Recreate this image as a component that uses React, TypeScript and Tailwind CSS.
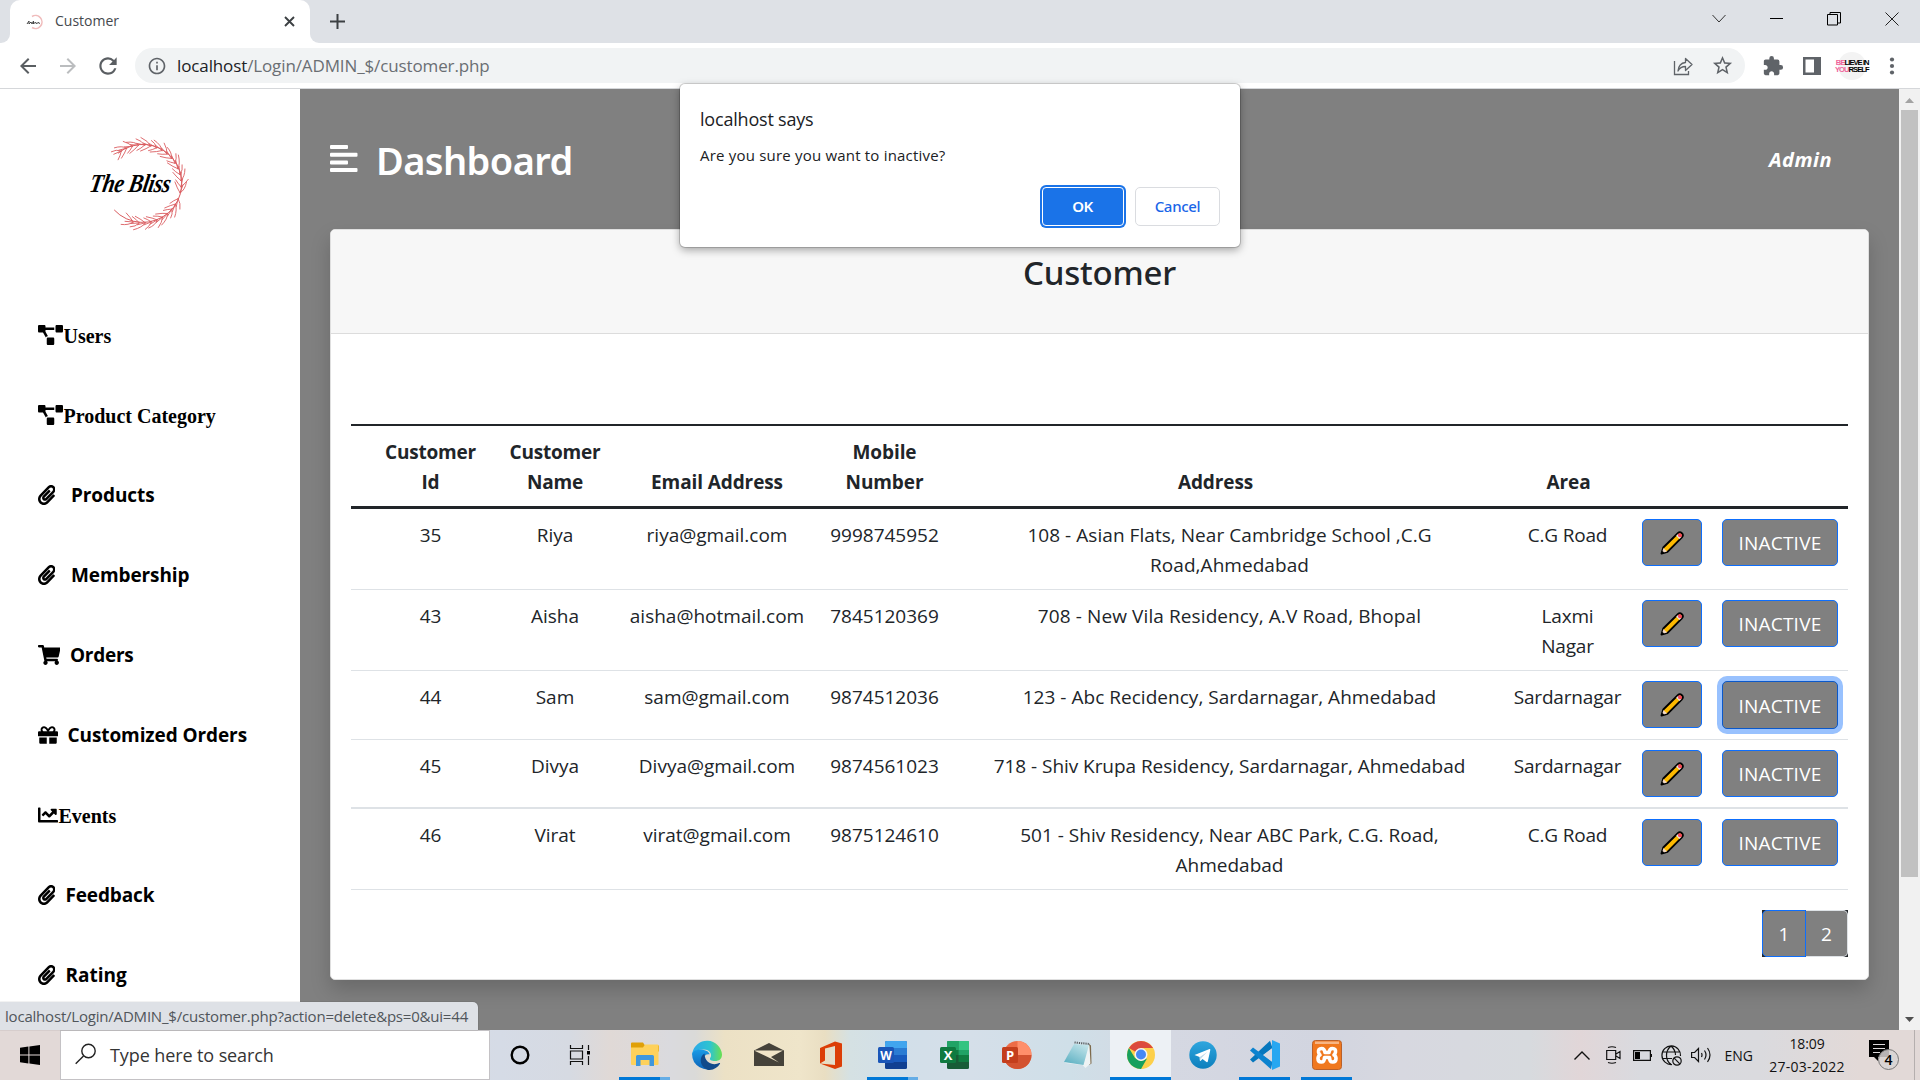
import React from 'react';
import { FaPaperclip, FaShoppingCart, FaGift, FaChartLine, FaProjectDiagram } from 'react-icons/fa';
import { MdArrowBack, MdArrowForward, MdRefresh, MdInfoOutline, MdStarBorder, MdExtension } from 'react-icons/md';

const polar = (cx: number, cy: number, r: number, a: number) => [cx + r * Math.cos(a), cy + r * Math.sin(a)];

function Wreath() {
  const start = (-122 * Math.PI) / 180;
  const end = (112 * Math.PI) / 180;
  const count = 26;
  const leaves = Array.from({ length: count }, (_, i) => {
    const a = start + ((end - start) * i) / count;
    const dir = a < 0.35 ? -1 : 1;
    const j = [0, 0.05, -0.03, 0.07][i % 4];
    const base = polar(52, 54, 39, a);
    const outer = polar(52, 54, 44.5 + (i % 3), a + (0.2 + j) * dir);
    const outerMid = polar(52, 54, 43.5, a + 0.08 * dir);
    const inner = polar(52, 54, 34 - (i % 2), a + (0.22 + j) * dir);
    const innerMid = polar(52, 54, 35.5, a + 0.1 * dir);
    const mid = polar(52, 54, 41, a + 0.2 * dir);
    return `M${base}Q${outerMid} ${outer}M${base}Q${innerMid} ${inner}M${base}L${mid}`;
  }).join('');
  return (
    <svg width="110" height="105" viewBox="0 0 110 105" className="absolute inset-0">
      <path d={`M${polar(52, 54, 39, (-128 * Math.PI) / 180)}A39 39 0 1 1 ${polar(52, 54, 38, (137 * Math.PI) / 180)}`} fill="none" stroke="#d4494d" strokeWidth="0.9" />
      <path d={leaves} fill="none" stroke="#da5c60" strokeWidth="0.9" strokeLinecap="round" />
    </svg>
  );
}

function Logo() {
  return (
    <div className="relative h-[105px] w-[110px]">
      <Wreath />
      <div className="absolute left-0 top-[38px] origin-left -skew-x-12 scale-x-[0.84] whitespace-nowrap font-['Liberation_Serif',serif] text-[26px] font-bold italic leading-[32px] tracking-[-0.5px] text-black">
        The Bliss
      </div>
    </div>
  );
}

function TabStrip() {
  return (
    <div className="flex h-[43px] shrink-0 bg-[#dee1e6]">
      <div className="flex w-[10px] items-end bg-white">
        <div className="h-full w-[10px] rounded-br-[9px] bg-[#dee1e6]" />
      </div>
      <div className="bg-[#dee1e6]">
        <div className="flex h-[43px] w-[300px] items-center rounded-t-[10px] bg-white pl-[16px] pr-[15px]">
          <svg width="18" height="16" viewBox="0 0 18 16">
            <path d="M6 2.500A6.500 6.500 0 1 1 6 13.500" fill="none" stroke="#f0bcbc" strokeWidth="1.600" />
            <path d="M1 10l2-3v3l2-2 1 2 1.500-3v3l2-2 1 2 2-2 1 2" fill="none" stroke="#444" strokeWidth="1" />
          </svg>
          <span className="ml-[11px] mt-[-2px] flex-1 font-['Open_Sans',sans-serif] text-[14px] text-[#45494d]">Customer</span>
          <svg width="11" height="11" viewBox="0 0 11 11" className="mt-[-1px]">
            <path d="M1 1l9 9M10 1l-9 9" stroke="#3c4043" strokeWidth="1.900" />
          </svg>
        </div>
      </div>
      <div className="w-[10px] bg-white">
        <div className="h-full w-[10px] rounded-bl-[9px] bg-[#dee1e6]" />
      </div>
      <svg width="15" height="15" viewBox="0 0 15 15" className="ml-[10px] mt-[14px]">
        <path d="M7.500 0v15M0 7.500h15" stroke="#3c4043" strokeWidth="2" />
      </svg>
      <div className="ml-auto flex gap-[44px] pr-[21px] pt-[12px]">
        <svg width="14" height="14" viewBox="0 0 14 14"><path d="M.5 3l6.500 7 6.500-7" fill="none" stroke="#333" strokeWidth="1" /></svg>
        <svg width="13" height="14" viewBox="0 0 13 14"><path d="M0 6.500h13" stroke="#000" /></svg>
        <svg width="14" height="14" viewBox="0 0 14 14"><path d="M.5 2.500h10v10.500H.5zM3 2.500V.5h10.500V11H10.500" fill="none" stroke="#000" /></svg>
        <svg width="14" height="14" viewBox="0 0 14 14"><path d="M.5.5l13 13M13.500.5l-13 13" stroke="#222" strokeWidth="1" /></svg>
      </div>
    </div>
  );
}

function Toolbar() {
  return (
    <div className="flex h-[46px] shrink-0 items-center border-b border-[#d5d7da] bg-white pl-[16px]">
      <MdArrowBack size={24} className="text-[#5a5e62]" />
      <MdArrowForward size={24} className="ml-[16px] text-[#bbbdbf]" />
      <MdRefresh size={26} className="ml-[15px] text-[#5a5e62]" />
      <div className="ml-[14px] flex h-[35px] w-[1610px] items-center rounded-full bg-[#f1f3f4] pl-[12px] pr-[11px]">
        <MdInfoOutline size={20} className="text-[#5f6368]" />
        <span className="ml-[10px] flex-1 font-['Open_Sans',sans-serif] text-[17px] tracking-[-0.12px] text-[#6a6e73]">
          <span className="text-[#202124]">localhost</span>/Login/ADMIN_$/customer.php
        </span>
        <svg width="21" height="20" viewBox="0 0 21 20">
          <path d="M1.500 5v13.500h14V15" fill="none" stroke="#5f6368" strokeWidth="1.300" />
          <path d="M5 15c.5-5.500 3-8 7.500-8.500V2.500l6.500 6-6.500 6v-4C9 10.500 6.500 12 5 15z" fill="none" stroke="#5f6368" strokeWidth="1.300" strokeLinejoin="round" />
        </svg>
        <MdStarBorder size={23} className="ml-[17px] text-[#5f6368]" />
      </div>
      <MdExtension size={22} className="ml-[17px] text-[#5f6368]" />
      <svg width="18" height="18" viewBox="0 0 18 18" className="ml-[19px]">
        <path fillRule="evenodd" d="M0 0h18v18H0zM2.500 2.500v13H11v-13z" fill="#5f6368" />
      </svg>
      <div className="ml-[17px] flex h-[28px] w-[28px] flex-col items-center justify-center rounded-full bg-[#f3f3f3] font-['Liberation_Sans',sans-serif] text-[8px] font-bold leading-[7px] tracking-[-1px] text-black">
        <span className="scale-x-[0.95] whitespace-nowrap"><span className="text-[#f0649a]">BE</span>LIEVE IN</span>
        <span className="scale-x-[0.95] whitespace-nowrap"><span className="text-[#f0649a]">YOU</span>RSELF</span>
      </div>
      <svg width="6" height="18" viewBox="0 0 6 18" className="ml-[23px]">
        <g fill="#5f6368"><circle cx="3" cy="2.500" r="2.100" /><circle cx="3" cy="9" r="2.100" /><circle cx="3" cy="15.500" r="2.100" /></g>
      </svg>
    </div>
  );
}

const nav = [
  { label: 'Users', icon: <FaProjectDiagram className="mt-[-1px] h-[20px] w-[25px] shrink-0" />, serif: true, gap: 'ml-[1px]' },
  { label: 'Product Category', icon: <FaProjectDiagram className="mt-[-1px] h-[20px] w-[25px] shrink-0" />, serif: true, gap: 'ml-[1px]' },
  { label: 'Products', icon: <FaPaperclip className="h-[20px] w-[17.500px] shrink-0" />, serif: false, gap: 'ml-[16px] tracking-[-0.1px]' },
  { label: 'Membership', icon: <FaPaperclip className="h-[20px] w-[17.500px] shrink-0" />, serif: false, gap: 'ml-[16px] tracking-[-0.1px]' },
  { label: 'Orders', icon: <FaShoppingCart className="h-[20px] w-[22.500px] shrink-0" />, serif: false, gap: 'ml-[10px] tracking-[-0.26px]' },
  { label: 'Customized Orders', icon: <FaGift className="h-[20px] w-[20px] shrink-0" />, serif: false, gap: 'ml-[10px] tracking-[-0.09px]' },
  { label: 'Events', icon: <FaChartLine className="mt-[-1px] h-[20px] w-[20px] shrink-0" />, serif: true, gap: 'ml-[1px]' },
  { label: 'Feedback', icon: <FaPaperclip className="h-[20px] w-[17.500px] shrink-0" />, serif: false, gap: 'ml-[10.500px] tracking-[-0.14px]' },
  { label: 'Rating', icon: <FaPaperclip className="h-[20px] w-[17.500px] shrink-0" />, serif: false, gap: 'ml-[10.500px]' },
];

function Sidebar() {
  return (
    <aside className="h-full w-[300px] shrink-0 overflow-hidden bg-white">
      <div className="h-[206px] pl-[90px] pt-[41px]"><Logo /></div>
      {nav.map((n) => (
        <div key={n.label} className="flex h-[80px] items-center pl-[37.500px] text-black">
          {n.icon}
          <span className={n.serif ? "mt-px font-['Liberation_Serif',serif] text-[20px] font-bold" : "mt-px font-['Open_Sans',sans-serif] text-[19px] font-bold"}>
            <span className={n.gap}>{n.label}</span>
          </span>
        </div>
      ))}
    </aside>
  );
}

function Pencil() {
  return (
    <svg width="24" height="24" viewBox="0 0 24 24">
      <path d="M1.500 22.500l1.800-6L17.800 2.200a2.900 2.900 0 0 1 4.100 4.100L7.500 20.800z" fill="#fdb900" stroke="#000" strokeWidth="1.900" strokeLinejoin="round" />
      <path d="M1.900 22l1.500-5 3.700 3.600z" fill="#f3d9c4" />
      <path d="M16.200 4.800l1.800-1.800 3.300 3.300-1.800 1.700z" fill="#e6e6ea" />
      <path d="M18 3a2 2 0 0 1 3.100 3.200L20.900 6.400z" fill="#f2475b" />
      <circle cx="19.900" cy="4.300" r="1.900" fill="#f2475b" />
      <path d="M1.500 22.500l.8-2.800 2 2z" fill="#000" />
    </svg>
  );
}

const rows = [
  { id: '35', name: 'Riya', email: 'riya@gmail.com', mobile: '9998745952', address: ['108 - Asian Flats, Near Cambridge School ,C.G', 'Road,Ahmedabad'], area: ['C.G Road'], h: 'h-[81px]', border: 'border-b', track: 'tracking-[0.05px]' },
  { id: '43', name: 'Aisha', email: 'aisha@hotmail.com', mobile: '7845120369', address: ['708 - New Vila Residency, A.V Road, Bhopal'], area: ['Laxmi', 'Nagar'], h: 'h-[81px]', border: 'border-b', track: 'tracking-[0.1px]', low: true },
  { id: '44', name: 'Sam', email: 'sam@gmail.com', mobile: '9874512036', address: ['123 - Abc Recidency, Sardarnagar, Ahmedabad'], area: ['Sardarnagar'], h: 'h-[69px]', border: 'border-b', track: 'tracking-[0.03px]', low: true, focus: true },
  { id: '45', name: 'Divya', email: 'Divya@gmail.com', mobile: '9874561023', address: ['718 - Shiv Krupa Residency, Sardarnagar, Ahmedabad'], area: ['Sardarnagar'], h: 'h-[69px]', border: 'border-b-2', track: 'tracking-[-0.05px]', low: true },
  { id: '46', name: 'Virat', email: 'virat@gmail.com', mobile: '9875124610', address: ['501 - Shiv Residency, Near ABC Park, C.G. Road,', 'Ahmedabad'], area: ['C.G Road'], h: 'h-[81px]', border: 'border-b', track: '' },
];

function CustomerTable() {
  return (
    <div className="font-['Open_Sans',sans-serif] text-[19px] leading-[30px] text-[#212529]">
      <div className="grid h-[85px] grid-cols-[124px_125px_199px_136px_526px_28px_124px] items-end border-b-[3px] border-t-2 border-[#212529] pb-[9px] pl-[17.500px] text-center font-bold tracking-[-0.1px]">
        <div className="tracking-[-0.2px]">Customer<br />Id</div>
        <div className="tracking-[-0.2px]">Customer<br />Name</div>
        <div>Email Address</div>
        <div>Mobile<br />Number</div>
        <div>Address</div>
        <div />
        <div>Area</div>
      </div>
      {rows.map((r) => (
        <div key={r.id} className={`grid grid-cols-[124px_125px_199px_136px_554px_122px_83px_125px] border-[#dee2e6] pl-[17.500px] pt-[11px] text-center ${r.h} ${r.border}`}>
          <div>{r.id}</div>
          <div>{r.name}</div>
          <div>{r.email}</div>
          <div>{r.mobile}</div>
          <div className={r.track}>{r.address.map((l) => <div key={l}>{l}</div>)}</div>
          <div className="whitespace-nowrap tracking-[-0.19px]">{r.area.map((l) => <div key={l}>{l}</div>)}</div>
          <div className="-mt-px pl-[13.500px]">
            <div className="flex h-[47px] w-[60px] items-center justify-center rounded-[5px] border border-[#0d6efd] bg-[#808080]"><Pencil /></div>
          </div>
          <div className="-mt-px pl-[10.500px]">
            <div className={`flex w-[116px] items-center justify-center rounded-[5px] border bg-[#808080] tracking-[0.2px] text-white ${r.low ? 'pt-px' : ''} ${r.focus ? 'h-[48px] border-[#0a58ca] shadow-[0_0_0_5px_#98c1fe]' : 'h-[47px] border-[#0d6efd]'}`}>INACTIVE</div>
          </div>
        </div>
      ))}
    </div>
  );
}

function Page() {
  return (
    <div className="flex h-[941px] shrink-0 overflow-hidden bg-[#808080]">
      <Sidebar />
      <main className="flex min-w-0 flex-1 flex-col px-[30px]">
        <div className="flex h-[140px] shrink-0 items-start pr-[37px] text-white">
          <svg width="28" height="27" viewBox="0 0 28 27" className="mt-[56px]" fill="#fff">
            <rect width="18" height="4" rx="1" /><rect y="7.700" width="27.500" height="4" rx="1" /><rect y="15.400" width="18" height="4" rx="1" /><rect y="23" width="27.500" height="4" rx="1" />
          </svg>
          <h1 className="ml-[18px] mt-[44px] font-['Noto_Sans',sans-serif] text-[38px] font-semibold leading-[54px] tracking-[-0.6px]">Dashboard</h1>
          <span className="ml-auto mt-[56px] font-['Open_Sans',sans-serif] text-[20px] font-bold italic leading-[30px] tracking-[0.5px]">Admin</span>
        </div>
        <section className="flex h-[751px] w-[1539px] shrink-0 flex-col rounded-[5px] border border-[#dfdfdf] bg-white shadow-[0_10px_20px_rgba(0,0,0,0.18)]">
          <div className="flex h-[104px] shrink-0 justify-center rounded-t-[4px] border-b border-[#dcdcdc] bg-[#f7f7f7] pt-[20px]">
            <h2 className="font-['Noto_Sans',sans-serif] text-[33px] font-medium leading-[46px] tracking-[-0.2px] text-[#212529]">Customer</h2>
          </div>
          <div className="px-[20px] pt-[90px]">
            <CustomerTable />
            <div className="mt-[20px] flex justify-end">
              <div className="flex h-[47px] bg-[#212529] font-['Open_Sans',sans-serif] text-[19px] text-white">
                <div className="flex w-[44px] items-center justify-center rounded-l-[5px] border border-[#0d6efd] bg-[#808080] pt-[2px]">1</div>
                <div className="flex w-[42px] items-center justify-center rounded-r-[5px] border border-l-0 border-[#dee2e6] bg-[#808080] pt-[2px]">2</div>
              </div>
            </div>
          </div>
        </section>
      </main>
      <div className="flex w-[21px] shrink-0 flex-col items-center bg-[#f1f1f1]">
        <svg width="9" height="5" viewBox="0 0 9 5" className="mt-[9px]"><path d="M0 5L4.500 0 9 5z" fill="#a3a3a3" /></svg>
        <div className="mt-[7px] h-[767px] w-[17px] bg-[#c1c1c1]" />
        <svg width="9" height="5" viewBox="0 0 9 5" className="mb-[8px] mt-auto"><path d="M0 0L4.500 5 9 0z" fill="#505050" /></svg>
      </div>
    </div>
  );
}

function ConfirmDialog() {
  return (
    <div className="absolute left-[680px] top-[84px] h-[163px] w-[560px] rounded-[5px] bg-white px-[20px] font-['Open_Sans',sans-serif] text-[#202124] shadow-[0_0_0_1px_rgba(0,0,0,0.16),0_3px_8px_rgba(0,0,0,0.35)]">
      <div className="pt-[22px] text-[18px] leading-[26px] tracking-[-0.2px]">localhost says</div>
      <div className="mt-[12px] text-[15px] leading-[22px] tracking-[0.2px]">Are you sure you want to inactive?</div>
      <div className="mt-[21px] flex justify-end gap-[11px] font-['Noto_Sans',sans-serif] text-[15px] font-semibold">
        <div className="flex h-[39px] w-[82px] items-center justify-center rounded-[4px] border border-white bg-[#1a73e8] text-white shadow-[0_0_0_2px_#1a73e8]">
          <span className="-ml-px tracking-[-0.4px]">OK</span>
        </div>
        <div className="flex h-[39px] w-[85px] items-center justify-center rounded-[5px] border border-[#dadce0] font-medium tracking-[-0.3px] text-[#1a66e8]">Cancel</div>
      </div>
    </div>
  );
}

function OfficeTile({ letter, colors, badge }: { letter: string; colors: string[]; badge: string }) {
  return (
    <svg width="30" height="30" viewBox="0 0 30 30">
      <rect x="7" y="1" width="22" height="28" rx="1.500" fill={colors[3]} />
      <rect x="7" y="1" width="22" height="8" rx="1.500" fill={colors[0]} />
      <rect x="7" y="8" width="22" height="7" fill={colors[1]} />
      <rect x="7" y="15" width="22" height="7" fill={colors[2]} />
      <rect y="7" width="16" height="16" rx="1.500" fill={badge} />
      <text x="8" y="19.500" textAnchor="middle" fontFamily="Open Sans" fontWeight="700" fontSize="12" fill="#fff">{letter}</text>
    </svg>
  );
}

const apps = [
  {
    name: 'Explorer', bar: 'split',
    icon: (
      <svg width="30" height="30" viewBox="0 0 30 30">
        <path d="M1 3.500q0-1 1-1h11l2 3H29v6H1z" fill="#e0a008" />
        <path d="M1 7.500h12l2-3h12.500q1 0 1 1V24q0 1-1 1H2q-1 0-1-1z" fill="#fed15b" />
        <path d="M6 26V16.500q0-1.500 1.500-1.500h15q1.500 0 1.500 1.500V26h-4.500v-6h-9v6z" fill="#3f97dd" />
      </svg>
    ),
  },
  {
    name: 'Edge', bar: '',
    icon: (
      <svg width="30" height="30" viewBox="0 0 30 30">
        <defs>
          <linearGradient id="ea" x1="0" x2="1" y1="0.300" y2="0.300"><stop offset="0" stopColor="#2ba8ea" /><stop offset="0.600" stopColor="#2fc4cf" /><stop offset="1" stopColor="#6ae050" /></linearGradient>
          <linearGradient id="eb" x1="0" x2="0" y1="0" y2="1"><stop offset="0" stopColor="#1a9be6" /><stop offset="1" stopColor="#0c63b8" /></linearGradient>
        </defs>
        <path d="M.3 13A15 15 0 0 1 30 14.500c0 4.500-3 6.500-6.800 6.500-4 0-6-1.300-5-3 2.500-3.500-.5-8.500-6.200-8.500C6 9.500 2 11 .3 15z" fill="url(#ea)" />
        <path d="M.1 14C1 10.500 6 9 11 9.800c3.500.6 6 2.200 6.700 4.500C14 13.500 11.500 16 12 19.500c.6 5 6 8.500 11 7.500A15 15 0 0 1 .1 14z" fill="url(#eb)" />
        <path d="M12.500 13.500C7 16.500 7 26.500 16 30c5.500.3 9.500-2.500 12-6.300.3-.6-.2-.9-.7-.6-5 2.600-14.500 1-14.800-9.600z" fill="#114a8b" />
      </svg>
    ),
  },
  {
    name: 'Mail', bar: '',
    icon: (
      <svg width="30" height="30" viewBox="0 0 30 30">
        <path d="M0 10.500L15 3l15 7.500V26H0z" fill="#45423a" />
        <path d="M1 10.500h28L17 17l8 5.500L1 11z" fill="#f0e4c8" />
      </svg>
    ),
  },
  {
    name: 'Office', bar: '',
    icon: (
      <svg width="30" height="30" viewBox="0 0 30 30">
        <path d="M4 8L19 1.500l7 2v23l-7 2.500L4 23.500l15 1.500V6L9 8.500v12L4 23.500z" fill="#dc3e06" />
      </svg>
    ),
  },
  { name: 'Word', bar: 'split', icon: <OfficeTile letter="W" colors={['#41a5ee', '#2b7cd3', '#185abd', '#103f91']} badge="#1a56b8" /> },
  {
    name: 'Excel', bar: '',
    icon: (
      <svg width="30" height="30" viewBox="0 0 30 30">
        <rect x="7" y="1" width="22" height="28" rx="1.500" fill="#185c37" />
        <path d="M8 1h10.500v9H7V2q0-1 1-1z" fill="#21a366" />
        <path d="M18.500 1H28q1 0 1 1v8H18.500z" fill="#33c481" />
        <path d="M7 10h11.500v5H7z" fill="#107c41" /><path d="M18.500 10H29v5H18.500z" fill="#21a366" />
        <path d="M18.500 15H29v7H18.500z" fill="#107c41" />
        <rect y="7" width="16" height="16" rx="1.500" fill="#0f7a40" />
        <text x="8" y="19.500" textAnchor="middle" fontFamily="Open Sans" fontWeight="700" fontSize="13" fill="#fff">X</text>
      </svg>
    ),
  },
  {
    name: 'PowerPoint', bar: '',
    icon: (
      <svg width="30" height="30" viewBox="0 0 30 30">
        <circle cx="15.500" cy="15" r="14" fill="#ed6c47" />
        <path d="M15.500 1a14 14 0 0 1 14 14h-14z" fill="#ff8f6b" /><path d="M1.500 15h28a14 14 0 0 1-28 0z" fill="#d35230" />
        <rect y="7" width="16" height="16" rx="1.500" fill="#c43e1c" />
        <text x="8" y="19.500" textAnchor="middle" fontFamily="Open Sans" fontWeight="700" fontSize="13" fill="#fff">P</text>
      </svg>
    ),
  },
  {
    name: 'Notepad', bar: '',
    icon: (
      <svg width="30" height="30" viewBox="0 0 30 30">
        <defs><linearGradient id="np" x1="0.800" x2="0.200" y1="0" y2="1"><stop offset="0" stopColor="#c3e4ea" /><stop offset="1" stopColor="#5cb0c2" /></linearGradient></defs>
        <path d="M25 4l2 1.500.5 18L25 25z" fill="#7d6a4c" />
        <path d="M1 23L10 4l15.500 1.500 1 18-5 4.500-3-3z" fill="#eef3f4" />
        <path d="M0 22L10 4l15 1-5.500 20z" fill="url(#np)" />
        <path d="M10.500 2.500l15.500 1.500" stroke="#5b6163" strokeWidth="2" strokeDasharray="1.200 1" />
      </svg>
    ),
  },
  {
    name: 'Chrome', bar: 'active',
    icon: (
      <svg width="30" height="30" viewBox="0 0 30 30">
        <circle cx="15" cy="15" r="14" fill="#fdd04a" />
        <path d="M15 15L2.900 8A14 14 0 0 1 27.100 8H15z" fill="#dc4a3d" />
        <path d="M2.900 8A14 14 0 0 0 15 29l6-10.500-6 2.500-6-3z" fill="#17a05e" />
        <circle cx="15" cy="14.500" r="6.500" fill="#f4f4f4" /><circle cx="15" cy="14.500" r="5" fill="#4688f4" />
      </svg>
    ),
  },
  {
    name: 'Telegram', bar: '',
    icon: (
      <svg width="30" height="30" viewBox="0 0 30 30">
        <defs><linearGradient id="tg" x1="0" x2="0" y1="0" y2="1"><stop offset="0" stopColor="#2ea6de" /><stop offset="1" stopColor="#0d7fbd" /></linearGradient></defs>
        <circle cx="15" cy="15" r="13.700" fill="url(#tg)" />
        <path d="M6.500 15L21.500 9q1-.2.8 1l-2.500 11.500q-.4 1-1.300.5l-4-3-2 2-.7-.4-.2-3.600z" fill="#fff" />
        <path d="M11.800 17l7.500-5-6 6-.5 2.500z" fill="#bcd9ea" />
      </svg>
    ),
  },
  {
    name: 'VS Code', bar: 'full',
    icon: (
      <svg width="30" height="30" viewBox="0 0 30 30">
        <path d="M0 19.500L20 .7l2.500 7.300L3 22.500z" fill="#0677bd" />
        <path d="M0 10.500L3 7.500 22.500 22 21 29.300z" fill="#0c83cf" />
        <path d="M22 0l8 3.500v23L22 30z" fill="#27a7f1" />
        <path d="M22 8.500L13.500 15l8.500 6.500z" fill="#d6dae3" />
      </svg>
    ),
  },
  {
    name: 'XAMPP', bar: 'full',
    icon: (
      <svg width="30" height="30" viewBox="0 0 30 30">
        <rect x="0.500" y="0.500" width="29" height="29" rx="3" fill="#f0781e" stroke="#b9602a" />
        <path d="M3 1.500h24v2.500H3z" fill="#f7b584" />
        <path d="M9.500 8.500q3 0 3.500 4h4q.5-4 3.500-4 3.500 0 3 3.500-.3 2-1.500 3 2 1 2 3.500 0 3.500-3.200 3.500-3.300 0-3.300-4.500h-5q0 4.500-3.300 4.500-3.200 0-3.200-3.500 0-2.500 2-3.500-1.200-1-1.500-3-.3-3.500 3-3.500z" fill="none" stroke="#fff" strokeWidth="3.600" strokeLinejoin="round" />
      </svg>
    ),
  },
];

function Taskbar() {
  return (
    <div className="flex h-[50px] shrink-0 bg-[linear-gradient(90deg,#e2d9d7_0px,#e2d9d7_60px,#d5dbe6_500px,#d6dae2_570px,#e0d9d6_610px,#dadade_670px,#dadad8_695px,#ece1c5_725px,#efe5ca_800px,#e9dec2_825px,#d5e1e3_850px,#d2dfe9_900px,#d5dfe9_970px,#cfdfe8_1070px,#d5d8e2_1170px,#d2d5e0_1320px,#d7d8e0_1400px,#d7dade_1530px,#e1d6d8_1580px,#d9dadf_1640px,#dadade_1760px,#e2d9d7_1860px,#e2d9d7_1920px)]">
      <div className="flex w-[60px] items-center justify-center">
        <svg width="20" height="20" viewBox="0 0 20 20"><path d="M0 2.800L8.400 1.600V9.500H0zM9.400 1.400L20 0v9.500H9.400zM0 10.500h8.400v7.900L0 17.200zM9.400 10.500H20V20L9.400 18.600z" /></svg>
      </div>
      <div className="flex w-[430px] items-center border border-[#c4c2c5] bg-white pl-[14px]">
        <svg width="22" height="22" viewBox="0 0 22 22" className="mt-[-2px]"><circle cx="13.500" cy="8" r="6.700" fill="none" stroke="#222" strokeWidth="1.400" /><path d="M8.500 13L.7 20.800" stroke="#222" strokeWidth="1.400" /></svg>
        <span className="ml-[13px] font-['Open_Sans',sans-serif] text-[18px] tracking-[-0.1px] text-[#343434]">Type here to search</span>
      </div>
      <div className="flex w-[60px] items-center justify-center">
        <svg width="20" height="20" viewBox="0 0 20 20"><circle cx="10" cy="10" r="8.300" fill="none" stroke="#000" strokeWidth="2.400" /></svg>
      </div>
      <div className="flex w-[64px] items-center pl-[19px]">
        <svg width="22" height="20" viewBox="0 0 22 20"><path d="M1.500 0v3.500h12V0M1.500 20v-3.500h12V20M1.500 6h12v8h-12zM19.500 0v5M19.500 11v9" fill="none" stroke="#111" strokeWidth="1.200" /><path d="M18 6h3v3.500h-3z" /></svg>
      </div>
      {apps.map((a) => (
        <div key={a.name} className={`flex w-[62px] flex-col items-center border-r border-transparent bg-clip-padding ${a.bar === 'active' ? 'bg-[#edf1f5]' : ''}`}>
          <div className="mt-[10px] h-[30px]">{a.icon}</div>
          {a.bar === 'split' && <div className="mt-[7px] flex h-[3px] w-[51px] bg-[#65ade6]"><div className="h-full w-[41px] bg-[#0078d7]" /></div>}
          {a.bar === 'full' && <div className="mt-[7px] h-[3px] w-[51px] bg-[#0078d7]" />}
          {a.bar === 'active' && <div className="mt-[7px] h-[3px] w-full bg-[#0078d7]" />}
        </div>
      ))}
      <div className="ml-auto flex items-center font-['Open_Sans',sans-serif] text-[#111]">
        <svg width="16" height="9" viewBox="0 0 16 9"><path d="M.5 8.500L8 1l7.500 7.500" fill="none" stroke="#111" strokeWidth="1.400" /></svg>
        <svg width="16" height="18" viewBox="0 0 16 18" className="ml-[16px]"><path d="M.7 4.500h9v9h-9zM10 8l4-2.500v7L10 10M2 1.500q4-1.500 8 0M2 16.500q4 1.500 8 0" fill="none" stroke="#111" strokeWidth="1.200" /></svg>
        <svg width="19" height="11" viewBox="0 0 19 11" className="ml-[11px]"><path d="M.6.6h16.800v9.800H.6zM18.400 4v3" fill="none" stroke="#111" strokeWidth="1.200" /><path d="M2 2h5v7H2z" /></svg>
        <svg width="21" height="21" viewBox="0 0 21 21" className="ml-[9px]">
          <g fill="none" stroke="#111" strokeWidth="1.200"><path d="M11 19.500A9.300 9.300 0 1 1 19.500 11M1 7h18M1 13.500h10M10 1c-6 5-6 14 0 18.500M10 1c3.500 3 4.500 6 4.500 9" /><circle cx="16" cy="16" r="4.200" /><path d="M13.200 13.200l5.600 5.600" /></g>
        </svg>
        <svg width="21" height="18" viewBox="0 0 21 18" className="ml-[9px]"><path d="M.6 6.500h3L7.500 2.500v13L3.600 11.500h-3zM10.500 7q1 2 0 4M13.500 4.500q3 4.500 0 9M16.500 2q5 7 0 14" fill="none" stroke="#111" strokeWidth="1.200" /></svg>
        <span className="ml-[13px] text-[14px]">ENG</span>
        <div className="ml-[14px] w-[80px] text-center text-[14px] leading-[23px]">
          <div className="tracking-[-0.14px]">18:09</div>
          <div className="whitespace-nowrap tracking-[0.25px]">27-03-2022</div>
        </div>
        <div className="relative ml-[22px] h-[30px] w-[30px]">
          <svg width="30" height="30" viewBox="0 0 30 30"><path d="M0 0h20v17H9v4l-4-4H0z" /><path d="M4 4.500h12M4 8.500h12M4 12.500h7" stroke="#dcd8da" strokeWidth="1.200" /></svg>
          <div className="absolute left-[9px] top-[9px] flex h-[21px] w-[21px] items-center justify-center rounded-full border border-[#777] bg-[#d8d4d4]/85 text-[14px] font-semibold text-black">4</div>
        </div>
        <div className="ml-[15px] mr-[5px] h-[50px] w-px bg-[#b5afae]" />
      </div>
    </div>
  );
}

export default function App() {
  return (
    <div className="relative flex h-[1080px] w-[1920px] flex-col overflow-hidden bg-white">
      <TabStrip />
      <Toolbar />
      <Page />
      <Taskbar />
      <ConfirmDialog />
      <div className="absolute left-0 top-[1002px] flex h-[28px] w-[478px] items-center rounded-tr-[5px] bg-[#dee1e6] pl-[5px] font-['Open_Sans',sans-serif] text-[15px] tracking-[-0.2px] text-[#50555a] shadow-[0_0_1px_rgba(0,0,0,0.5)]">
        localhost/Login/ADMIN_$/customer.php?action=delete&amp;ps=0&amp;ui=44
      </div>
    </div>
  );
}
